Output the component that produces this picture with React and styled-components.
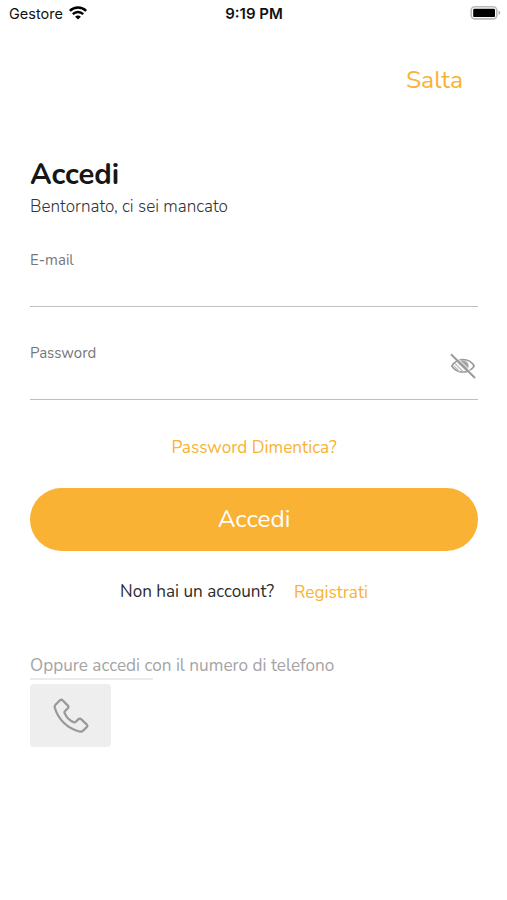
import React, { useState } from "react";
import styled, { createGlobalStyle } from "styled-components";

const ORANGE = "#f9b233";

function StatusBar() {
    return (
        <Status>
            <Carrier>
                <span>Gestore</span>
                <svg width="18" height="14" viewBox="0 0 18 14" fill="none" stroke="#000">
                    <path d="M0.8 4.9C5.4 0.3 12.6 0.3 17.2 4.9" strokeWidth="2.5" />
                    <path d="M3.8 8.1C6.8 5.2 11.2 5.2 14.2 8.1" strokeWidth="2.4" />
                    <path d="M9 13.6L6.1 10.8C7.8 9.2 10.2 9.2 11.9 10.8Z" fill="#000" stroke="none" />
                </svg>
            </Carrier>
            <Time>9:19 PM</Time>
            <Battery>
                <svg width="32" height="16" viewBox="0 0 32 16">
                    <rect x="1.2" y="1.7" width="25.6" height="12.2" rx="3.6" fill="#fff" stroke="#b9b9b9" strokeWidth="1.6" />
                    <rect x="3.2" y="3.7" width="21.8" height="8.4" rx="1.2" fill="#000" />
                    <path d="M28.6 5.6C30.8 6.4 30.8 9.2 28.6 10Z" fill="#aaa" />
                </svg>
            </Battery>
        </Status>
    );
}

function EyeOff() {
    return (
        <svg width="26" height="26" viewBox="0 0 26 26" fill="none" stroke="#9b9b9b">
            <path d="M1.8 13C7 4.4 19 4.4 24.2 13C19 21.2 7 21.2 1.8 13Z" strokeWidth="1.6" />
            <path d="M9.5 8.6A5 5 0 1 1 16.5 17.4Z" fill="#a4a4a4" stroke="none" />
            <path d="M5 10.5L14 19.5M4 13L10 19M7.5 9L18 19" stroke="#bdbdbd" strokeWidth="1.2" />
            <path d="M2.4 0.2L26 23.4" stroke="#fff" strokeWidth="1" />
            <path d="M1 1.2L25 25" strokeWidth="2" />
        </svg>
    );
}

function PhoneIcon() {
    return (
        <svg width="36" height="36" viewBox="0 0 36 36" fill="none" stroke="#999" strokeWidth="2.3" strokeLinejoin="round">
            <path d="M7 2.3Q8.3 1.1 9.6 2.3L14.8 7.6Q16 9 14.8 10.3L12.1 13Q11.1 13.9 11.7 15.1C13.2 18.8 16.8 22.6 20.8 24.2Q21.9 24.7 22.8 23.8L25.5 21.2Q26.8 19.9 28.1 21.2L33.6 26.3Q35 27.7 33.7 29.1L30.3 32.5Q28.7 34.1 26.3 33.5C14.2 30.3 5.2 21.4 1.8 9.8Q1.3 7.9 2.7 6.5Z" />
        </svg>
    );
}

function Field({ label, name, type, children }) {
    return (
        <FieldBox>
            <label htmlFor={name}>{label}</label>
            <input id={name} name={name} type={type} />
            {children}
        </FieldBox>
    );
}

function LoginPage() {
    const [visible, setVisible] = useState(false);
    return (
        <Page>
            <GlobalStyle />
            <StatusBar />
            <Header>
                <SkipButton>Salta</SkipButton>
            </Header>
            <Content>
                <Title>Accedi</Title>
                <Subtitle>Bentornato, ci sei mancato</Subtitle>
                <form onSubmit={(e) => e.preventDefault()}>
                    <Field label="E-mail" name="email" type="email" />
                    <Field label="Password" name="password" type={visible ? "text" : "password"}>
                        <EyeButton type="button" onClick={() => setVisible(!visible)}>
                            <EyeOff />
                        </EyeButton>
                    </Field>
                    <Forgot>
                        <LinkButton type="button">Password Dimentica?</LinkButton>
                    </Forgot>
                    <Submit type="submit">Accedi</Submit>
                </form>
                <Register>
                    <span>Non hai un account?</span>
                    <LinkButton>Registrati</LinkButton>
                </Register>
                <Alternative>Oppure accedi con il numero di telefono</Alternative>
                <Divider />
                <PhoneButton>
                    <PhoneIcon />
                </PhoneButton>
            </Content>
        </Page>
    );
}

const GlobalStyle = createGlobalStyle`
    body{
        margin: 0;
        background: #fff;
    }
    *{
        box-sizing: border-box;
    }
    button{
        border: 0;
        padding: 0;
        background: none;
        font-family: inherit;
        cursor: pointer;
    }
    svg{
        display: block;
    }
`;

const Page = styled.div`
    height: 900px;
    overflow: hidden;
    background: #fff;
    font-family: Nunito, Lato, sans-serif;
`;

const Status = styled.div`
    display: grid;
    grid-template-columns: 1fr auto 1fr;
    align-items: center;
    height: 28px;
    padding: 0 5px 0 9px;
    font-family: Inter, sans-serif;
    font-size: 14.5px;
    color: #111;
`;

const Carrier = styled.div`
    display: flex;
    align-items: center;
    gap: 6px;
    margin-bottom: 1px;
    svg{
        margin-bottom: 2px;
    }
`;

const Time = styled.span`
    margin: 0 3px 1px 0;
    font-size: 15px;
    font-weight: 600;
`;

const Battery = styled.div`
    justify-self: end;
    margin-bottom: 2px;
`;

const Header = styled.div`
    display: flex;
    justify-content: flex-end;
    height: 129px;
    padding: 37px 44px 0 0;
`;

const LinkButton = styled.button`
    height: 22px;
    font-size: 17.2px;
    line-height: 22px;
    color: ${ORANGE};
`;

const SkipButton = styled(LinkButton)`
    height: 30px;
    font-size: 24.7px;
    line-height: 30px;
`;

const Content = styled.div`
    padding: 0 29px 0 30px;
`;

const Title = styled.h1`
    margin: 0 0 5px;
    font-size: 29.2px;
    line-height: 34px;
    color: #161616;
`;

const Subtitle = styled.p`
    margin: 0 0 32px;
    font-size: 17.1px;
    font-weight: 300;
    line-height: 22px;
    color: #333;
`;

const FieldBox = styled.div`
    position: relative;
    display: flex;
    flex-direction: column;
    height: 57px;
    margin-bottom: 36px;
    border-bottom: 1.5px solid #c0c0c0;
    label{
        padding-top: 1px;
        font-size: 15px;
        line-height: 18px;
        color: #777;
    }
    input{
        flex: 1;
        min-height: 0;
        border: 0;
        outline: 0;
        padding: 0;
        background: none;
        font: inherit;
    }
`;

const EyeButton = styled.button`
    position: absolute;
    top: 10px;
    right: 2px;
`;

const Forgot = styled.div`
    display: flex;
    justify-content: center;
    padding-top: 1px;
    margin-bottom: 29px;
`;

const Submit = styled.button`
    display: block;
    width: 100%;
    height: 62.5px;
    border-radius: 32px;
    && {
        background: ${ORANGE};
    }
    font-size: 24.4px;
    color: #fff;
`;

const Register = styled.div`
    display: flex;
    gap: 20px;
    height: 22px;
    margin: 30.5px 0 52px 90px;
    span{
        font-size: 17.1px;
        line-height: 22px;
        color: #2c2c2c;
    }
    button{
        margin-top: 1px;
    }
`;

const Alternative = styled.div`
    height: 23px;
    font-size: 17.15px;
    line-height: 22px;
    color: #a4a4a4;
`;

const Divider = styled.div`
    width: 123px;
    height: 2px;
    margin-bottom: 4px;
    background: #ebebeb;
`;

const PhoneButton = styled.button`
    display: flex;
    align-items: center;
    justify-content: center;
    width: 81px;
    height: 63px;
    border-radius: 4px;
    && {
        background: #eee;
    }
`;

export default LoginPage;
